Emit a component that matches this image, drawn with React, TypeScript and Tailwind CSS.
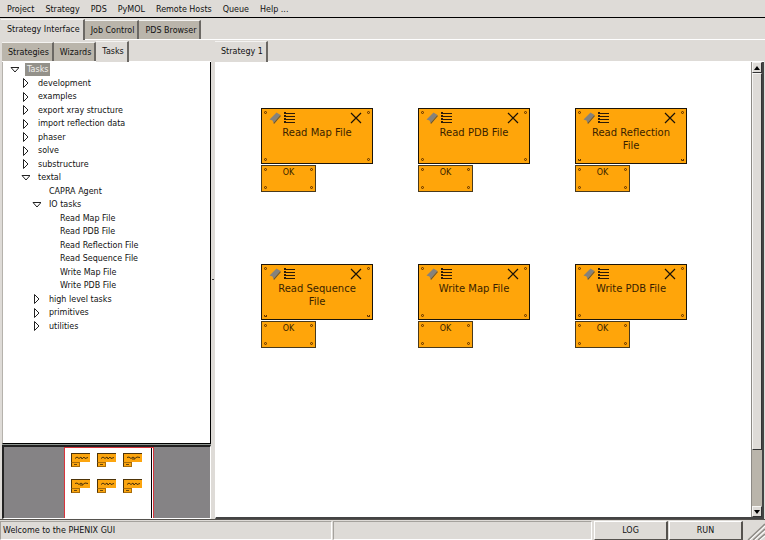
import { useState } from 'react';
import clsx from 'clsx';

const menus = ['Project', 'Strategy', 'PDS', 'PyMOL', 'Remote Hosts', 'Queue', 'Help ...'];

type Row = { label: string; level: number; state?: 'open' | 'closed' };

const tree: Row[] = [
  { label: 'Tasks', level: 0, state: 'open' },
  { label: 'development', level: 1, state: 'closed' },
  { label: 'examples', level: 1, state: 'closed' },
  { label: 'export xray structure', level: 1, state: 'closed' },
  { label: 'import reflection data', level: 1, state: 'closed' },
  { label: 'phaser', level: 1, state: 'closed' },
  { label: 'solve', level: 1, state: 'closed' },
  { label: 'substructure', level: 1, state: 'closed' },
  { label: 'textal', level: 1, state: 'open' },
  { label: 'CAPRA Agent', level: 2 },
  { label: 'IO tasks', level: 2, state: 'open' },
  { label: 'Read Map File', level: 3 },
  { label: 'Read PDB File', level: 3 },
  { label: 'Read Reflection File', level: 3 },
  { label: 'Read Sequence File', level: 3 },
  { label: 'Write Map File', level: 3 },
  { label: 'Write PDB File', level: 3 },
  { label: 'high level tasks', level: 2, state: 'closed' },
  { label: 'primitives', level: 2, state: 'closed' },
  { label: 'utilities', level: 2, state: 'closed' },
];

const indent = ['pl-[6px]', 'pl-[17px]', 'pl-[28px]', 'pl-[39px]'];

const tasks = [
  { title: 'Read Map File' },
  { title: 'Read PDB File' },
  { title: 'Read Reflection File', wraps: true },
  { title: 'Read Sequence File', wraps: true },
  { title: 'Write Map File' },
  { title: 'Write PDB File' },
];

function Tab({
  label,
  active,
  onClick,
}: {
  label: string;
  active: boolean;
  onClick?: () => void;
}) {
  return (
    <button
      type="button"
      role="tab"
      aria-selected={active}
      onClick={onClick}
      className={clsx(
        'border-t border-r-2 border-t-[#f4f3f1] border-r-[#6b6864] pr-[3px] pl-[6px]',
        active ? '-mb-px bg-[#dedbd7]' : 'mt-px bg-[#bab5ab] pt-px',
      )}
    >
      {label}
    </button>
  );
}

function Tabs({ labels, initial = 0 }: { labels: string[]; initial?: number }) {
  const [current, setCurrent] = useState(initial);
  return (
    <div role="tablist" className="flex h-[22px] shrink-0 border-b border-white pt-px">
      {labels.map((label, i) => (
        <Tab key={label} label={label} active={i === current} onClick={() => setCurrent(i)} />
      ))}
    </div>
  );
}

function Expander({ state }: { state?: 'open' | 'closed' }) {
  return (
    <svg viewBox="0 0 10 10" className="size-[10px] shrink-0" fill="none" aria-hidden="true">
      {state === 'open' && <path d="M2 2.5H10L6 7Z" stroke="#222" />}
      {state === 'closed' && <path d="M3.5 0.5V9.5L8 5Z" stroke="#222" />}
    </svg>
  );
}

function TaskTree() {
  const [selected, setSelected] = useState('Tasks');
  return (
    <ul role="tree" className="grid h-[270px] auto-rows-fr">
      {tree.map((row) => (
        <li key={row.label} role="treeitem" className={clsx('flex items-center', indent[row.level])}>
          <Expander state={row.state} />
          <button
            type="button"
            onClick={() => setSelected(row.label)}
            className={clsx(
              'ml-[6px] h-[13px] px-[2px] pt-px',
              selected === row.label && 'bg-[#93918a] text-[#f0efec]',
            )}
          >
            {row.label}
          </button>
        </li>
      ))}
    </ul>
  );
}

function Overview() {
  return (
    <div className="flex h-[74px] shrink-0 justify-center border-2 border-r border-b border-[#222] border-r-white border-b-white bg-[#858385] pl-1">
      <div className="flex w-[90px] border-x border-t border-[#d8343c] bg-white pr-px">
        <div className="grid flex-1 grid-cols-[repeat(3,19px)] grid-rows-[14px_14px] content-start gap-x-[7px] gap-y-3 border-r border-black pt-[5px] pl-[6px]">
          {tasks.map((task) => (
            <div key={task.title}>
              <div className="flex h-[9px] items-center justify-center border-t border-l border-[#4d3308] bg-[#fca50e]">
                <svg viewBox="0 0 13 4" className="h-1 w-[13px]" fill="none" aria-hidden="true">
                  <path
                    d={task.wraps ? 'M0 1.5L2 1L4 2.5L6 1L8 2.5L10 1L13 1.5M5 3H8' : 'M0 2.5L2 1L4 2.5L6 1L7 3L9 1L10 2.5L13 1.5'}
                    stroke="#4d3308"
                  />
                </svg>
              </div>
              <div className="flex h-[5px] w-[9px] items-center justify-center border border-[#a86d0c] border-l-[#4d3308] bg-[#fca50e]">
                <div className="h-px w-[3px] bg-[#6b480c]" />
              </div>
            </div>
          ))}
        </div>
      </div>
    </div>
  );
}

function Pins({ cut = false }: { cut?: boolean }) {
  const low = cut ? 'h-[2px] rounded-b-full border-t-0' : 'h-[3px] rounded-full';
  return (
    <>
      <span className="absolute top-[2px] left-[2px] size-[3px] rounded-full border border-[#5a2c00]" />
      <span className="absolute top-[2px] right-[2px] size-[3px] rounded-full border border-[#5a2c00]" />
      <span className={clsx('absolute bottom-[2px] left-[2px] w-[3px] border border-[#5a2c00]', low)} />
      <span className={clsx('absolute right-[2px] bottom-[2px] w-[3px] border border-[#5a2c00]', low)} />
    </>
  );
}

function TaskNode({ title, wraps }: { title: string; wraps?: boolean }) {
  return (
    <div className="h-[84px]">
      <div className="relative h-14 border border-[#1c1408] bg-[#ffa50a] pt-[3px]">
        <Pins cut={wraps} />
        <div className="flex h-3 items-center pr-[10px] pl-[7px]">
          <button type="button" aria-label="Edit task">
            <svg viewBox="0 0 12 12" className="size-3" aria-hidden="true">
              <path d="M0.5 7.5L7.5 0.5L11.5 3L4.5 11L3.5 8.5Z" fill="#85827c" />
              <path d="M4.5 11L11.5 3V4.5L5 12Z" fill="#5f5238" />
            </svg>
          </button>
          <button type="button" aria-label="Task options" className="ml-[3px]">
            <svg viewBox="0 0 12 12" className="size-3" shapeRendering="crispEdges" aria-hidden="true">
              <path d="M0 0h2v2H0zM0 3h2v2H0zM0 6h2v2H0zM0 9h2v2H0z" fill="#2b1a08" />
              <path d="M2 1.5H11M2 4.5H11M2 7.5H11M2 10.5H11" stroke="#2b1a08" />
            </svg>
          </button>
          <button type="button" aria-label="Remove task" className="ml-auto">
            <svg viewBox="0 0 12 12" className="size-3" fill="none" aria-hidden="true">
              <path d="M1 1L11 11M11 1L1 11" stroke="#1a1208" strokeWidth="1.2" />
            </svg>
          </button>
        </div>
        <h2 className="mt-[2px] px-3 text-center text-[10px] leading-[13px] text-[#3a1f00]">{title}</h2>
      </div>
      <div className="relative mt-px h-[27px] w-[55px] border border-[#4a3a1c] bg-[#ffa50a] pt-[2px] text-center text-[#3a1f00]">
        <Pins />
        OK
      </div>
    </div>
  );
}

function ScrollArrow({ up = false }: { up?: boolean }) {
  return (
    <button
      type="button"
      aria-label={up ? 'Scroll up' : 'Scroll down'}
      className="flex h-[11px] shrink-0 items-center justify-center border border-[#f6f5f3] border-r-[#333] border-b-[#333] bg-[#dedbd7]"
    >
      <svg viewBox="0 0 6 4" className="h-1 w-[6px]" aria-hidden="true">
        <path d={up ? 'M3 0L6 4H0Z' : 'M0 0H6L3 4Z'} fill="#000" />
      </svg>
    </button>
  );
}

export default function App() {
  return (
    <div className="flex h-screen flex-col bg-[#dedbd7] font-['DejaVu_Sans',sans-serif] text-[8px] leading-[10px] text-[#111]">
      <nav className="flex h-[18px] shrink-0 items-center gap-[11px] border-b border-black pt-[2px] pl-[7px]">
        {menus.map((menu) => (
          <button key={menu} type="button">
            {menu}
          </button>
        ))}
      </nav>

      <div className="pl-px">
        <Tabs labels={['Strategy Interface', 'Job Control', 'PDS Browser']} />
      </div>

      <main className="flex min-h-0 flex-1 pr-px pl-[2px]">
        <aside className="flex w-[209px] shrink-0 flex-col">
          <Tabs labels={['Strategies', 'Wizards', 'Tasks']} initial={2} />
          <div className="min-h-0 flex-1 overflow-hidden border-r border-b border-l border-black border-l-[#b5b2ac] bg-white pt-px">
            <TaskTree />
          </div>
          <div className="h-px shrink-0 bg-[#8f9691]" />
          <Overview />
        </aside>

        <div className="flex w-1 shrink-0 cursor-col-resize items-center justify-center">
          <div className="h-px w-[2px] bg-[#333]" />
        </div>

        <section className="flex min-w-0 flex-1 flex-col">
          <Tabs labels={['Strategy 1']} />
          <div className="flex min-h-0 flex-1 border-r-2 border-b-2 border-l border-[#444] border-l-white bg-white">
            <div className="grid min-w-0 flex-1 grid-cols-[repeat(3,112px)] content-start gap-x-[45px] gap-y-[72px] overflow-hidden pt-[46px] pl-[45px]">
              {tasks.map((task) => (
                <TaskNode key={task.title} title={task.title} wraps={task.wraps} />
              ))}
            </div>
            <div className="flex w-[11px] shrink-0 flex-col border-l border-[#8d8a85] bg-[#bab5ab]">
              <ScrollArrow up />
              <div className="flex min-h-0 flex-1 flex-col">
                <div className="h-[87%] border border-[#f6f5f3] border-r-[#333] border-b-[#333] bg-[#dedbd7]" />
              </div>
              <ScrollArrow />
            </div>
          </div>
        </section>
      </main>

      <footer className="flex h-[21px] shrink-0 gap-px border-t border-[#55524e] pt-px">
        <p className="flex flex-[331] items-center border border-[#a5a29d] border-r-white border-b-white pl-[2px]">
          Welcome to the PHENIX GUI
        </p>
        <p className="flex-[260] border border-[#a5a29d] border-r-white border-b-white" />
        <button
          type="button"
          className="ml-px w-[74px] border border-white border-r-2 border-r-[#55524e] border-b-[#55524e] pt-px"
        >
          LOG
        </button>
        <button
          type="button"
          className="w-[74px] border border-white border-r-2 border-r-[#55524e] border-b-[#55524e] pt-px"
        >
          RUN
        </button>
        <svg viewBox="0 0 20 18" className="ml-px h-[18px] w-5 self-end" aria-hidden="true">
          <path d="M3 18L20 2M8 18L20 7M13 18L20 12" stroke="#8d8a85" strokeWidth="1.4" />
          <path d="M5 18L20 4M10 18L20 9M15 18L20 14" stroke="#fff" />
        </svg>
      </footer>
    </div>
  );
}
